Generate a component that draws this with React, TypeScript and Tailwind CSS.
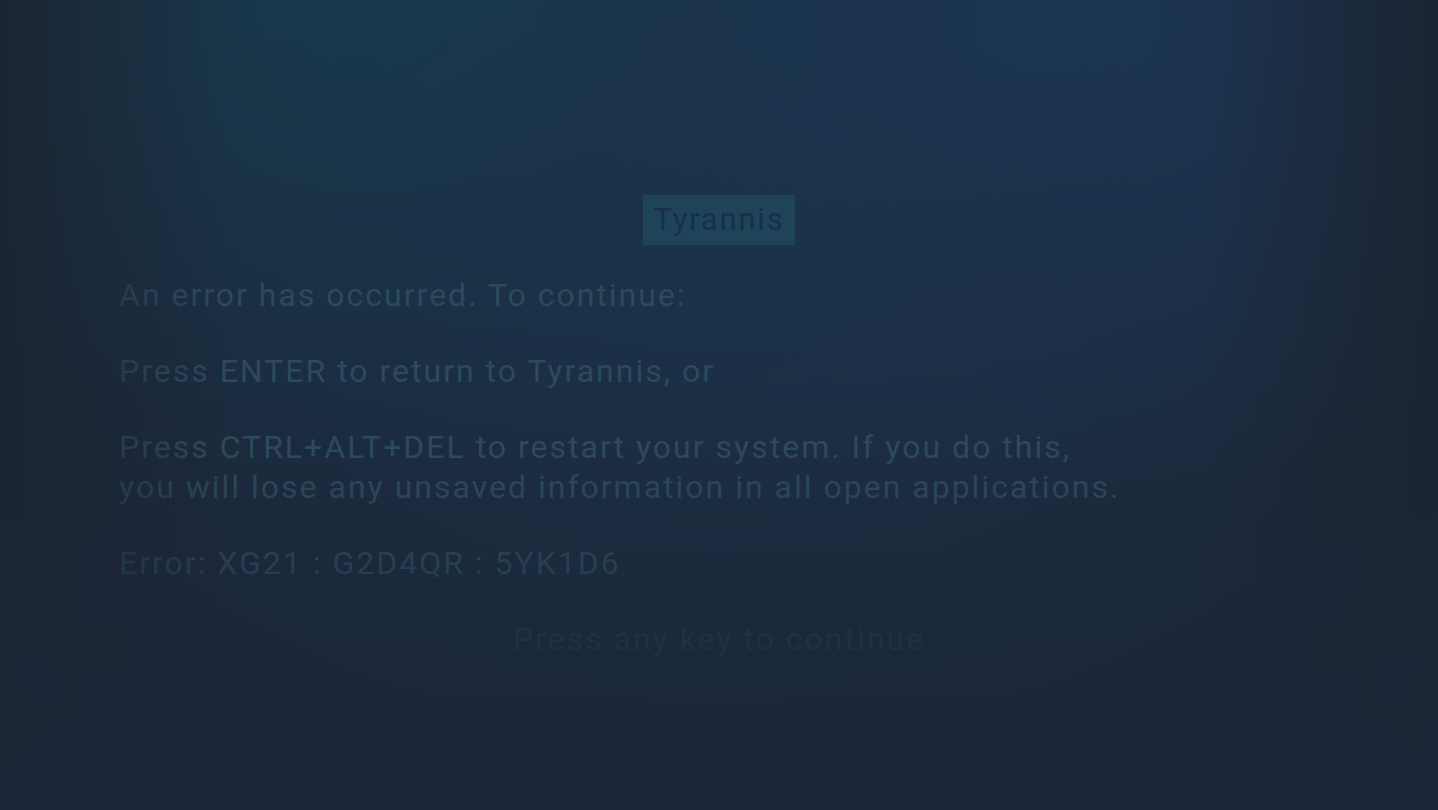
import React from "react";

const font = { fontFamily: "Roboto, 'Liberation Sans', sans-serif" };

export default function App() {
  return (
    <div
      className="relative w-full h-[810px] overflow-hidden bg-[#1b2739]"
      style={font}
    >
      {/* background glows */}
      <div className="absolute inset-0 bg-[radial-gradient(ellipse_700px_440px_at_420px_0px,#173f50_0%,rgba(23,63,80,0)_100%)]" />
      <div className="absolute inset-0 bg-[radial-gradient(ellipse_640px_480px_at_1060px_20px,#1c3859_0%,rgba(28,56,89,0)_100%)]" />
      <div className="absolute inset-0 bg-[radial-gradient(ellipse_820px_560px_at_720px_240px,rgba(27,50,74,0.9)_0%,rgba(27,50,74,0)_100%)]" />

      <div className="relative mx-auto w-[1200px] pt-[195px]">
        <div className="flex justify-center">
          <div className="h-[50px] px-[10px] flex items-center bg-[#1f4459] text-[#172f48] text-[31px] tracking-[1.8px]">
            Tyrannis
          </div>
        </div>

        <div className="mt-[30px] text-[32px] leading-[40px] tracking-[2px] text-[#2c4a5c]">
          <p>An error has occurred. To continue:</p>
          <p className="mt-[36px]">Press ENTER to return to Tyrannis, or</p>
          <p className="mt-[36px]">
            Press CTRL+ALT+DEL to restart your system. If you do this,
            <br />
            you will lose any unsaved information in all open applications.
          </p>
          <p className="mt-[36px]">Error: XG21 : G2D4QR : 5YK1D6</p>
          <p className="mt-[36px] text-center text-[#243b50]">Press any key to continue</p>
        </div>
      </div>

      {/* vignette over everything */}
      <div className="pointer-events-none absolute inset-0 bg-[linear-gradient(90deg,rgba(27,36,51,1)_0%,rgba(27,36,51,0.5)_6%,rgba(27,36,51,0)_16%,rgba(27,36,51,0)_84%,rgba(27,36,51,0.55)_94%,rgba(27,36,51,1)_100%)]" />
      <div className="pointer-events-none absolute inset-0 bg-[linear-gradient(180deg,rgba(27,39,57,0)_55%,rgba(27,39,57,0.55)_80%,rgba(27,39,57,0.9)_100%)]" />
    </div>
  );
}
